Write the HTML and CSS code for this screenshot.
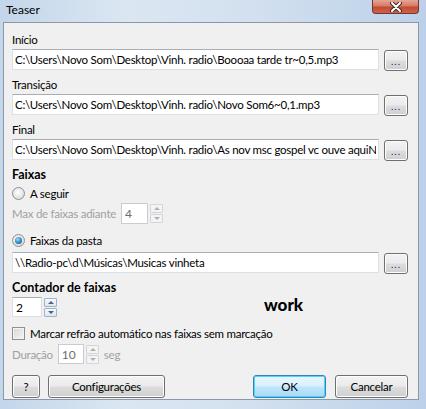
FILE: index.html
```html
<!DOCTYPE html>
<html lang="pt">
<head>
    <meta charset="UTF-8">
    <meta name="viewport" content="width=device-width, initial-scale=1.0">
    <title>Teaser</title>
    <link rel="stylesheet" href="styles.css">
</head>
<body>
    <div class="window">
        <div class="titlebar">
            <span class="title">Teaser</span>
            <button type="button" class="close">
                <svg width="14" height="10" viewBox="0 0 14 10">
                    <path d="M3 1 L11 9 M11 1 L3 9" stroke="#3a2a2a" stroke-width="4" stroke-linecap="round"/>
                    <path d="M3 1 L11 9 M11 1 L3 9" stroke="#ffffff" stroke-width="2" stroke-linecap="round"/>
                </svg>
            </button>
        </div>
        <div class="client">
            <div class="label">Início</div>
            <div class="path-row">
                <input type="text" class="textbox" value="C:\Users\Novo Som\Desktop\Vinh. radio\Boooaa tarde tr~0,5.mp3">
                <button type="button" class="browse">...</button>
            </div>

            <div class="label gap">Transição</div>
            <div class="path-row">
                <input type="text" class="textbox" value="C:\Users\Novo Som\Desktop\Vinh. radio\Novo Som6~0,1.mp3">
                <button type="button" class="browse">...</button>
            </div>

            <div class="label gap">Final</div>
            <div class="path-row">
                <input type="text" class="textbox" value="C:\Users\Novo Som\Desktop\Vinh. radio\As nov msc gospel vc ouve aquiNS">
                <button type="button" class="browse">...</button>
            </div>

            <div class="label gap bold">Faixas</div>
            <label class="option first">
                <span class="radio"></span>
                A seguir
            </label>
            <div class="spin-row max-row">
                <span class="muted">Max de faixas adiante</span>
                <div class="spin disabled">
                    <input type="text" class="spin-input" value="4">
                    <div class="spin-buttons">
                        <span class="spin-btn up"></span>
                        <span class="spin-btn down"></span>
                    </div>
                </div>
            </div>
            <label class="option folder">
                <span class="radio checked"></span>
                Faixas da pasta
            </label>
            <div class="path-row folder-row">
                <input type="text" class="textbox" value="\\Radio-pc\d\Músicas\Musicas vinheta">
                <button type="button" class="browse">...</button>
            </div>

            <div class="label gap bold">Contador de faixas</div>
            <div class="counter-row">
                <div class="spin">
                    <input type="text" class="spin-input narrow" value="2">
                    <div class="spin-buttons">
                        <span class="spin-btn up"></span>
                        <span class="spin-btn down"></span>
                    </div>
                </div>
                <span class="work">work</span>
            </div>

            <label class="option check-row">
                <span class="checkbox"></span>
                Marcar refrão automático nas faixas sem marcação
            </label>
            <div class="spin-row duration-row">
                <span class="muted">Duração</span>
                <div class="spin disabled">
                    <input type="text" class="spin-input small" value="10">
                    <div class="spin-buttons">
                        <span class="spin-btn up"></span>
                        <span class="spin-btn down"></span>
                    </div>
                </div>
                <span class="muted">seg</span>
            </div>

            <div class="actions">
                <button type="button" class="btn help">?</button>
                <button type="button" class="btn settings">Configurações</button>
                <span class="spacer"></span>
                <button type="button" class="btn ok">OK</button>
                <button type="button" class="btn cancel">Cancelar</button>
            </div>
        </div>
    </div>
</body>
</html>
```

FILE: styles.css
```css
body {
    margin: 0;
    padding: 0;
    font-family: Lato, "Open Sans", sans-serif;
    font-size: 11.5px;
    letter-spacing: -0.25px;
    color: #000;
}
.window {
    width: 426px;
    height: 409px;
    box-sizing: border-box;
    display: flex;
    flex-direction: column;
    padding: 0 7px 9px 3px;
    background: linear-gradient(90deg, #c3d6ea 0%, #dbe6f2 30%, #d2e0ef 60%, #bcd1e9 100%);
    overflow: hidden;
}
.titlebar {
    height: 22px;
    display: flex;
    align-items: flex-start;
    justify-content: space-between;
}
.title {
    margin: 2px 0 0 3px;
    font-size: 12px;
    line-height: 15px;
    letter-spacing: 0;
}
.close {
    width: 47px;
    height: 14px;
    padding: 0;
    border: 1px solid #6d3a32;
    border-top: none;
    border-radius: 0 0 4px 4px;
    background: linear-gradient(#e7a595 0%, #d67b67 45%, #c44a33 55%, #d0624a 100%);
    display: flex;
    align-items: center;
    justify-content: center;
}
.client {
    flex: 1;
    background: #f0f0f0;
    border: 1px solid #8a98a8;
    padding: 9px 10px 0 8px;
    display: flex;
    flex-direction: column;
}
.label {
    line-height: 15px;
    height: 15px;
}
.label.gap {
    margin-top: 6px;
}
.bold {
    font-weight: bold;
    font-size: 12.5px;
    letter-spacing: 0;
}
.path-row {
    display: flex;
    align-items: flex-start;
    gap: 5px;
    margin-top: 2px;
}
.textbox {
    flex: 1;
    min-width: 0;
    height: 21px;
    box-sizing: border-box;
    margin: 0;
    padding: 0 2px;
    border: 1px solid #dbdfe6;
    border-top-color: #abadb3;
    background: #fff;
    font-family: inherit;
    font-size: 11.5px;
    letter-spacing: -0.25px;
    color: #000;
}
.browse, .btn {
    box-sizing: border-box;
    padding: 0;
    border: 1px solid #707070;
    border-radius: 3px;
    background: linear-gradient(#f2f2f2 0%, #ebebeb 48%, #dddddd 52%, #cfcfcf 100%);
    box-shadow: inset 0 0 0 1px #fcfcfc;
    font-family: inherit;
    font-size: 11.5px;
    letter-spacing: -0.25px;
    color: #000;
}
.browse {
    width: 24px;
    height: 21px;
    margin-top: 1px;
    font-size: 10px;
    line-height: 21px;
    color: #1a1a80;
    letter-spacing: 1px;
}
.option {
    display: flex;
    align-items: center;
    gap: 5px;
    height: 15px;
    line-height: 15px;
}
.option.first {
    margin-top: 4px;
}
.option.folder {
    margin-top: 9px;
}
.folder-row {
    margin-top: 4px;
}
.radio {
    width: 11px;
    height: 11px;
    border-radius: 50%;
    border: 1px solid #8e8f8f;
    background: radial-gradient(circle at 45% 40%, #ffffff 0%, #e6e6e6 55%, #cfcfcf 100%);
    position: relative;
}
.radio.checked::after {
    content: "";
    position: absolute;
    left: 2px;
    top: 2px;
    width: 7px;
    height: 7px;
    border-radius: 50%;
    background: radial-gradient(circle at 40% 35%, #a9ddf6 0%, #2f8fcb 50%, #14456e 100%);
}
.checkbox {
    width: 11px;
    height: 11px;
    border: 1px solid #8e8f8f;
    background: linear-gradient(135deg, #d8d8d8 0%, #f4f4f4 100%);
    box-shadow: inset 0 0 0 1px #f4f4f4;
}
.spin-row {
    display: flex;
    align-items: center;
    gap: 5px;
    height: 21px;
}
.max-row {
    margin-top: 2px;
}
.muted {
    color: #a0a0a0;
}
.spin {
    display: flex;
    align-items: center;
    gap: 2px;
}
.spin-input {
    width: 27px;
    height: 21px;
    box-sizing: border-box;
    margin: 0;
    padding: 0 3px;
    border: 1px solid #dbdfe6;
    border-top-color: #abadb3;
    background: #fff;
    font-family: inherit;
    font-size: 12px;
    color: #000;
}
.spin-input.narrow {
    width: 30px;
    height: 20px;
}
.spin-input.small {
    width: 26px;
    height: 20px;
}
.spin.disabled .spin-input {
    color: #6d6d6d;
    border-color: #c9ccd2;
}
.spin-buttons {
    display: flex;
    flex-direction: column;
    gap: 1px;
}
.spin-btn {
    width: 11px;
    height: 7px;
    border: 1px solid #a0b4c8;
    border-radius: 1px;
    background: linear-gradient(#f6f9fc, #dde6ef);
    position: relative;
}
.spin-btn::after {
    content: "";
    position: absolute;
    left: 3px;
    border-left: 3px solid transparent;
    border-right: 3px solid transparent;
}
.spin-btn.up::after {
    top: 2px;
    border-bottom: 3px solid #4d6185;
}
.spin-btn.down::after {
    top: 2px;
    border-top: 3px solid #4d6185;
}
.spin.disabled .spin-btn {
    border-color: #d2d6dc;
    background: #f4f4f4;
}
.spin.disabled .spin-btn.up::after {
    border-bottom-color: #b0b0b0;
}
.spin.disabled .spin-btn.down::after {
    border-top-color: #b0b0b0;
}
.counter-row {
    display: flex;
    align-items: center;
    margin-top: 2px;
    height: 20px;
}
.work {
    margin-left: 207px;
    margin-top: -6px;
    font-size: 17px;
    font-weight: 900;
    letter-spacing: 0;
}
.check-row {
    margin-top: 9px;
}
.duration-row {
    margin-top: 3px;
    height: 20px;
}
.actions {
    display: flex;
    gap: 8px;
    margin-top: 11px;
}
.btn {
    height: 23px;
}
.help {
    width: 28px;
}
.settings {
    width: 117px;
}
.spacer {
    flex: 1;
}
.ok {
    width: 73px;
    border-color: #3c7fb1;
    background: linear-gradient(#eaf6fd 0%, #d9f0fc 48%, #bee6fd 52%, #a7d9f5 100%);
    box-shadow: inset 0 0 0 1px #48d8fb;
}
.cancel {
    width: 73px;
    margin-left: 1px;
}
```
